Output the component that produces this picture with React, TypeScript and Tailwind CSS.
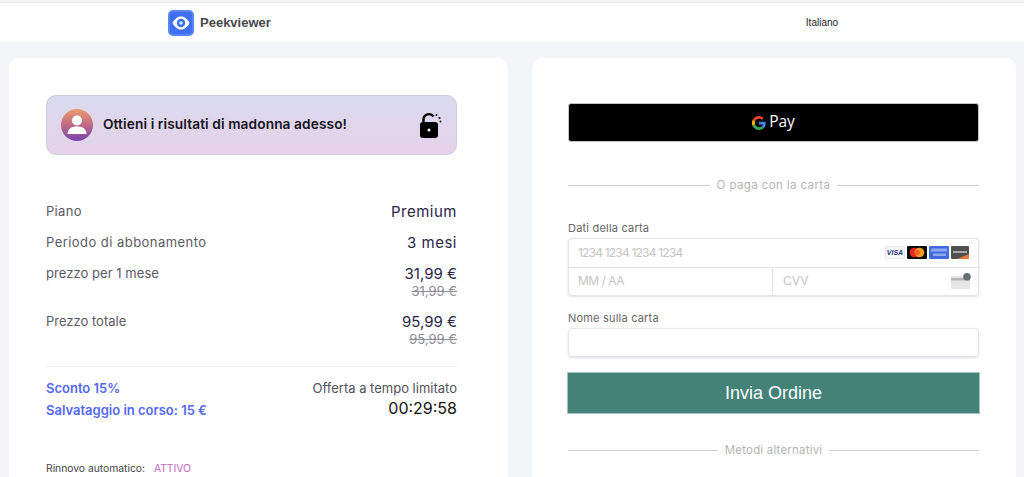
const poppins = "font-['Inter','Noto_Sans',sans-serif]";

function EyeLogo() {
	return (
		<svg width="18" height="14" viewBox="0 0 18 14">
			<path d="M0.500 7 C3 2.300 6 0.500 9 0.500 S15 2.300 17.500 7 C15 11.700 12 13.500 9 13.500 S3 11.700 0.500 7 Z" fill="#fff" />
			<circle cx="9" cy="7" r="4.200" fill="#3f6ff0" />
			<circle cx="9" cy="7" r="1.700" fill="#dfe8ff" />
		</svg>
	);
}

function Avatar() {
	return (
		<svg width="32" height="32" viewBox="0 0 32 32">
			<defs>
				<linearGradient id="avatarBg" x1="0" y1="0" x2="0" y2="1">
					<stop offset="0" stopColor="#ec9a6c" />
					<stop offset="0.5" stopColor="#bf6a87" />
					<stop offset="1" stopColor="#7443ad" />
				</linearGradient>
			</defs>
			<circle cx="16" cy="16" r="16" fill="url(#avatarBg)" />
			<circle cx="16" cy="11.500" r="5" fill="#fff" />
			<path d="M6.500 25 C6.500 20 10 17.500 16 17.500 S25.500 20 25.500 25 Z" fill="#fff" />
		</svg>
	);
}

function CardLogos() {
	return (
		<div className="flex items-center gap-[2px]">
			<div className="w-[20px] h-[13px] bg-[#f6f7fb] border border-[#e6e8f0] rounded-[1px] flex items-center justify-center text-[7px] font-bold italic text-[#26337a] font-['Liberation_Sans',sans-serif]">VISA</div>
			<svg width="20" height="13" viewBox="0 0 20 13">
				<rect width="20" height="13" rx="1" fill="#0b0b0b" />
				<circle cx="7.500" cy="6.500" r="4.800" fill="#e8251f" />
				<circle cx="12.500" cy="6.500" r="4.800" fill="#f59a23" />
				<circle cx="10" cy="6.500" r="2.800" fill="#f0641f" />
			</svg>
			<svg width="20" height="13" viewBox="0 0 20 13">
				<rect width="20" height="13" rx="1" fill="#4269e0" />
				<rect x="2" y="2.500" width="16" height="3" fill="#8ea8ee" />
				<rect x="4" y="7.500" width="13" height="2.500" fill="#8ea8ee" />
			</svg>
			<svg width="18" height="13" viewBox="0 0 18 13">
				<rect width="18" height="13" rx="1" fill="#505050" />
				<rect x="2" y="5" width="14" height="2" fill="#a8a8a8" />
				<path d="M6 13 L18 8 V13 Z" fill="#e8793a" />
			</svg>
		</div>
	);
}

function CvvIcon() {
	return (
		<svg width="20" height="16" viewBox="0 0 20 16">
			<rect x="0" y="3" width="19" height="13" rx="1" fill="#e6e6e6" />
			<rect x="0" y="5" width="19" height="2.500" fill="#b4b4b4" />
			<circle cx="16" cy="3.800" r="3.800" fill="#6a6d70" />
		</svg>
	);
}

function GoogleG() {
	return (
		<svg width="14" height="14" viewBox="0 0 48 48">
			<path fill="#EA4335" d="M24 9.500c3.500 0 6.700 1.200 9.200 3.600l6.900-6.900C35.900 2.400 30.400 0 24 0 14.600 0 6.500 5.400 2.600 13.200l8 6.200C12.500 13.600 17.800 9.500 24 9.500z" />
			<path fill="#4285F4" d="M46.900 24.500c0-1.600-.1-3.100-.4-4.500H24v9h12.900c-.6 3-2.200 5.500-4.700 7.200l7.700 6c4.500-4.200 7-10.300 7-17.700z" />
			<path fill="#FBBC05" d="M10.600 28.600c-.5-1.400-.8-3-.8-4.600s.3-3.200.8-4.600l-8-6.200C.9 16.500 0 20.100 0 24s.9 7.500 2.600 10.800l8-6.200z" />
			<path fill="#34A853" d="M24 48c6.500 0 11.900-2.100 15.900-5.800l-7.700-6c-2.200 1.500-4.900 2.300-8.200 2.300-6.200 0-11.500-4.200-13.400-9.800l-8 6.200C6.500 42.600 14.600 48 24 48z" />
		</svg>
	);
}

function Divider({ label, track }: { label: string; track: string }) {
	return (
		<div className="flex items-center gap-[7px]">
			<div className="flex-1 h-px bg-[#cfcfcf]" />
			<span className={`text-[11.5px] leading-4 text-[#b4b4b4] ${track}`}>{label}</span>
			<div className="flex-1 h-px bg-[#cfcfcf]" />
		</div>
	);
}

function PriceRow({ label, price, old, track, wide }: { label: string; price: string; old?: string; track: string; wide?: boolean }) {
	return (
		<div className="flex justify-between">
			<span className={`text-[13px] leading-5 text-[#5c5a63] ${track}`}>{label}</span>
			<div className="text-right">
				<div className={`h-5 text-[15px] leading-[22px] text-[#2a2547] ${wide ? "tracking-[0.5px]" : ""}`}>{price}</div>
				{old && <div className="text-[13px] leading-5 mt-[-2px] line-through text-[#8d8b99]">{old}</div>}
			</div>
		</div>
	);
}

export default function App() {
	return (
		<div className={`h-[477px] overflow-hidden bg-[#f4f5f9] ${poppins}`}>
			{/* header */}
			<div className="h-[40px] mt-[2px] border-t border-[#e8e8ea] bg-white flex items-center pl-[168px]">
				<div className="w-[26px] h-[26px] rounded-[5px] bg-[#3f6ff0] border-2 border-[#5a86f7] flex items-center justify-center">
					<EyeLogo />
				</div>
				<span className="ml-[6px] text-[13px] font-bold text-[#48484c] font-['Liberation_Sans',sans-serif]">Peekviewer</span>
				<span className="ml-[535px] text-[10px] text-[#222] font-['Liberation_Sans',sans-serif]">Italiano</span>
			</div>

			<div className="flex pl-[9px] pt-[16px]">
				{/* summary */}
				<div className="w-[499px] h-[500px] bg-white rounded-t-[10px] pl-[37px] pr-[51px] pt-[37px]">
					<div className="h-[60px] rounded-[10px] border border-[#cfc9e0] bg-gradient-to-b from-[#dadaee] to-[#e5d2ea] flex items-center pl-[14px] pr-[14px]">
						<Avatar />
						<span className="ml-[10px] mb-[2px] text-[13.7px] font-semibold tracking-[0.1px] text-[#161320]">Ottieni i risultati di madonna adesso!</span>
						<svg className="ml-auto" width="22" height="26" viewBox="0 0 22 26">
							<path d="M3.500 11 V7.500 a5.500 5.500 0 0 1 10 -3" fill="none" stroke="#000" strokeWidth="2.400" />
							<rect x="0" y="10" width="18" height="16" rx="3" fill="#000" />
							<circle cx="9" cy="18" r="1.500" fill="#fff" />
							<circle cx="16.500" cy="3" r="1" fill="#000" />
							<circle cx="19.500" cy="6" r="1" fill="#000" />
							<circle cx="20.500" cy="9.500" r="1" fill="#000" />
						</svg>
					</div>

					<div className="mt-[46px] flex flex-col gap-[11px]">
						<PriceRow label="Piano" price="Premium" track="tracking-[0.3px]" wide />
						<PriceRow label="Periodo di abbonamento" price="3 mesi" track="tracking-[0.45px]" wide />
						<PriceRow label="prezzo per 1 mese" price="31,99 €" old="31,99 €" track="tracking-[0.05px]" />
						<div className="mt-[-1px]">
							<PriceRow label="Prezzo totale" price="95,99 €" old="95,99 €" track="tracking-[0px]" />
						</div>
					</div>

					<div className="mt-[17px] h-px bg-[#eeeeee]" />

					<div className="mt-[11px] flex justify-between">
						<div className="font-semibold text-[13px] text-[#5468f6]">
							<div className="leading-[20px]">Sconto 15%</div>
							<div className="leading-[20px] mt-[2px]">Salvataggio in corso: 15 €</div>
						</div>
						<div className="text-right">
							<div className="text-[13px] leading-[20px] text-[#55535c]">Offerta a tempo limitato</div>
							<div className="text-[16px] leading-[20px] text-[#111]">00:29:58</div>
						</div>
					</div>

					<div className="mt-[41px] text-[10.3px] leading-[14px] text-[#444]">
						Rinnovo automatico:<span className="ml-[9px] text-[#c069bd]">ATTIVO</span>
					</div>
				</div>

				{/* payment */}
				<div className="ml-[24px] w-[484px] h-[500px] bg-white rounded-t-[10px] pl-[36px] pr-[37px] pt-[45px]">
					<div className="h-[39px] bg-black border border-[#c4c4c4] rounded-[3px] flex items-center justify-center gap-[3px]">
						<GoogleG />
						<span className="mb-[2px] text-[15.5px] text-white font-['Open_Sans',sans-serif]">Pay</span>
					</div>

					<div className="mt-[35px]">
						<Divider label="O paga con la carta" track="tracking-[0.4px]" />
					</div>

					<div className="mt-[27px] text-[11px] leading-[16px] tracking-[0.2px] text-[#666]">Dati della carta</div>
					<div className="mt-[2px] h-[58px] rounded-[4px] border border-[#e3e3e8] shadow-[0_1px_2px_rgba(50,50,93,0.15)] text-[12px] text-[#c4c4c4] flex flex-col">
						<div className="flex-1 flex items-center justify-between pl-[9px] pr-[9px] border-b border-[#e3e3e8]">
							<span className="tracking-[-0.8px]">1234 1234 1234 1234</span>
							<CardLogos />
						</div>
						<div className="flex-1 flex">
							<div className="w-[204px] flex items-center pl-[9px] border-r border-[#e3e3e8] tracking-[-0.5px]">MM / AA</div>
							<div className="flex-1 flex items-center justify-between pl-[10px] pr-[7px]">
								<span>CVV</span>
								<CvvIcon />
							</div>
						</div>
					</div>

					<div className="mt-[14px] text-[11px] leading-[16px] tracking-[0.2px] text-[#666]">Nome sulla carta</div>
					<div className="mt-[2px] h-[29px] rounded-[4px] border border-[#e3e3e8] shadow-[0_1px_2px_rgba(50,50,93,0.15)]" />

					<button className="block mt-[15px] ml-[-1px] w-[413px] h-[42px] bg-[#448277] border border-[#a3c5bf] text-white text-[18px] font-['Liberation_Sans',sans-serif]">
						Invia Ordine
					</button>

					<div className="mt-[28px]">
						<Divider label="Metodi alternativi" track="tracking-[0.2px]" />
					</div>
				</div>
			</div>
		</div>
	);
}
